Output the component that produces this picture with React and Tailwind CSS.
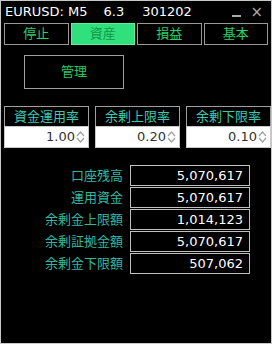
import React from "react";

const jp = { fontFamily: '"DejaVu Sans", "Noto Sans CJK JP", sans-serif' };

const tabs = ["停止", "資産", "損益", "基本"];
const rates = [
  { label: "資金運用率", value: "1.00" },
  { label: "余剰上限率", value: "0.20" },
  { label: "余剰下限率", value: "0.10" },
];
const rows = [
  { label: "口座残高", value: "5,070,617" },
  { label: "運用資金", value: "5,070,617" },
  { label: "余剰金上限額", value: "1,014,123" },
  { label: "余剰証拠金額", value: "5,070,617" },
  { label: "余剰金下限額", value: "507,062" },
];

const Spinner = () => (
  <svg width="9" height="14" viewBox="0 0 9 14" className="ml-[1px]">
    <path d="M1 6 L4.5 2 L8 6" fill="none" stroke="#a0a0a0" strokeWidth="1.2" />
    <path d="M1 8 L4.5 12 L8 8" fill="none" stroke="#a0a0a0" strokeWidth="1.2" />
  </svg>
);

export default function App() {
  return (
    <div className="w-[274px] h-[346px] bg-white" style={jp}>
      <div className="w-[272px] h-[344px] bg-black border border-[#c8c8c8] flex flex-col">
        {/* title */}
        <div className="h-[22px] flex items-center pl-[4px] pr-[8px] text-[13px] text-white">
          <span>EURUSD: M5</span>
          <span className="ml-[16px]">6.3</span>
          <span className="ml-[18px]">301202</span>
          <span className="ml-auto text-[#a8a8a8] flex items-center gap-[9px]">
            <span className="block w-[9px] h-[2px] bg-[#a8a8a8] mt-[8px]" />
            <span className="text-[15px] leading-none">×</span>
          </span>
        </div>

        {/* tabs */}
        <div className="grid grid-cols-4 gap-[2px] px-[3px] h-[22px]">
          {tabs.map((t, i) => (
            <div
              key={t}
              className={
                i === 1
                  ? "flex items-center justify-center border border-[#5ef09a] bg-[#2fe07c] text-[#129a48] text-[13px]"
                  : "flex items-center justify-center border border-[#9a9a9a] text-[#28d068] text-[13px]"
              }
            >
              {t}
            </div>
          ))}
        </div>

        {/* manage button */}
        <div className="pl-[23px] mt-[10px]">
          <div className="w-[100px] h-[34px] border border-[#a0a0a0] flex items-center justify-center text-[13px] text-[#28c868]">
            管理
          </div>
        </div>

        {/* rate inputs */}
        <div className="flex gap-[6px] pl-[3px] mt-[17px]">
          {rates.map((r) => (
            <div key={r.label} className="w-[85px] flex flex-col">
              <div className="h-[20px] border border-b-0 border-[#a0a0a0] flex items-center justify-center text-[13px] text-[#3cc8b4]">
                {r.label}
              </div>
              <div className="h-[22px] bg-white border border-[#c8c8c8] flex items-center justify-end pr-[3px] text-[13px] text-[#333333]">
                <span>{r.value}</span>
                <Spinner />
              </div>
            </div>
          ))}
        </div>

        {/* values */}
        <div className="flex flex-col gap-[1px] mt-[17px]">
          {rows.map((r) => (
            <div key={r.label} className="flex items-center h-[21px]">
              <div className="w-[122px] text-right text-[13px] text-[#30b8a0]">{r.label}</div>
              <div className="ml-[7px] w-[120px] h-[21px] border border-[#c0c0c0] flex items-center justify-end pr-[6px] text-[13px] text-white">
                {r.value}
              </div>
            </div>
          ))}
        </div>
      </div>
    </div>
  );
}
